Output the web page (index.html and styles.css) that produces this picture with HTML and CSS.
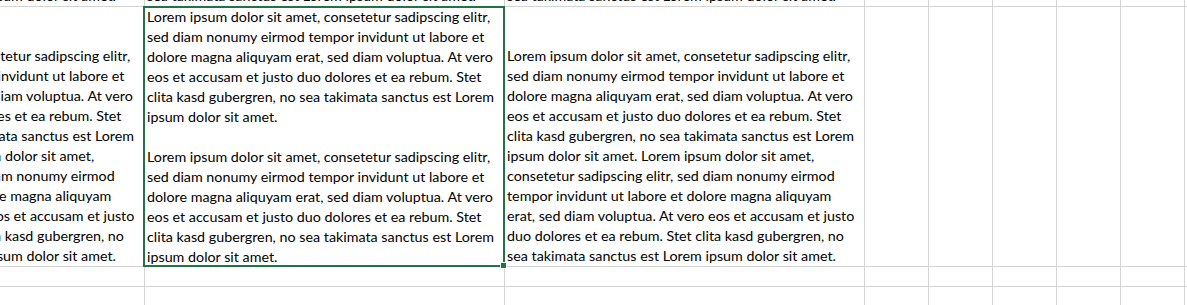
FILE: index.html
```html
<!DOCTYPE html>
<html lang="la">
<head>
<meta charset="utf-8">
<title>Sheet</title>
<link rel="stylesheet" href="styles.css">
</head>
<body>
<div class="sheet">
  <!-- row 1 (scrolled, only bottom visible) -->
  <div class="cell bottom"><div class="ln">sea takimata sanctus est Lorem ipsum dolor sit amet.</div></div>
  <div class="cell bottom"><div class="ln">sea takimata sanctus est Lorem ipsum dolor sit amet.</div></div>
  <div class="cell bottom"><div class="ln">sea takimata sanctus est Lorem ipsum dolor sit amet.</div></div>
  <div class="cell"></div><div class="cell"></div><div class="cell"></div><div class="cell"></div><div class="cell"></div><div class="cell"></div>

  <!-- row 2 -->
  <div class="cell bottom">
    <div class="ln">Lorem ipsum dolor sit amet, consetetur sadipscing elitr,</div>
    <div class="ln">sed diam nonumy eirmod tempor invidunt ut labore et</div>
    <div class="ln">dolore magna aliquyam erat, sed diam voluptua. At vero</div>
    <div class="ln">eos et accusam et justo duo dolores et ea rebum. Stet</div>
    <div class="ln">clita kasd gubergren, no sea takimata sanctus est Lorem</div>
    <div class="ln">ipsum dolor sit amet. Lorem ipsum dolor sit amet,</div>
    <div class="ln">consetetur sadipscing elitr, sed diam nonumy eirmod</div>
    <div class="ln">tempor invidunt ut labore et dolore magna aliquyam</div>
    <div class="ln">erat, sed diam voluptua. At vero eos et accusam et justo</div>
    <div class="ln">duo dolores et ea rebum. Stet clita kasd gubergren, no</div>
    <div class="ln">sea takimata sanctus est Lorem ipsum dolor sit amet.</div>
  </div>
  <div class="cell top selected">
    <div class="ln">Lorem ipsum dolor sit amet, consetetur sadipscing elitr,</div>
    <div class="ln">sed diam nonumy eirmod tempor invidunt ut labore et</div>
    <div class="ln">dolore magna aliquyam erat, sed diam voluptua. At vero</div>
    <div class="ln">eos et accusam et justo duo dolores et ea rebum. Stet</div>
    <div class="ln">clita kasd gubergren, no sea takimata sanctus est Lorem</div>
    <div class="ln">ipsum dolor sit amet.</div>
    <div class="ln">&nbsp;</div>
    <div class="ln">Lorem ipsum dolor sit amet, consetetur sadipscing elitr,</div>
    <div class="ln">sed diam nonumy eirmod tempor invidunt ut labore et</div>
    <div class="ln">dolore magna aliquyam erat, sed diam voluptua. At vero</div>
    <div class="ln">eos et accusam et justo duo dolores et ea rebum. Stet</div>
    <div class="ln">clita kasd gubergren, no sea takimata sanctus est Lorem</div>
    <div class="ln">ipsum dolor sit amet.</div>
    <div class="sel-box"></div>
    <div class="fill-handle"></div>
  </div>
  <div class="cell bottom">
    <div class="ln">Lorem ipsum dolor sit amet, consetetur sadipscing elitr,</div>
    <div class="ln">sed diam nonumy eirmod tempor invidunt ut labore et</div>
    <div class="ln">dolore magna aliquyam erat, sed diam voluptua. At vero</div>
    <div class="ln">eos et accusam et justo duo dolores et ea rebum. Stet</div>
    <div class="ln">clita kasd gubergren, no sea takimata sanctus est Lorem</div>
    <div class="ln">ipsum dolor sit amet. Lorem ipsum dolor sit amet,</div>
    <div class="ln">consetetur sadipscing elitr, sed diam nonumy eirmod</div>
    <div class="ln">tempor invidunt ut labore et dolore magna aliquyam</div>
    <div class="ln">erat, sed diam voluptua. At vero eos et accusam et justo</div>
    <div class="ln">duo dolores et ea rebum. Stet clita kasd gubergren, no</div>
    <div class="ln">sea takimata sanctus est Lorem ipsum dolor sit amet.</div>
  </div>
  <div class="cell"></div><div class="cell"></div><div class="cell"></div><div class="cell"></div><div class="cell"></div><div class="cell"></div>

  <!-- row 3 -->
  <div class="cell"></div><div class="cell"></div><div class="cell"></div>
  <div class="cell"></div><div class="cell"></div><div class="cell"></div><div class="cell"></div><div class="cell"></div><div class="cell"></div>

  <!-- row 4 -->
  <div class="cell"></div><div class="cell"></div><div class="cell"></div>
  <div class="cell"></div><div class="cell"></div><div class="cell"></div><div class="cell"></div><div class="cell"></div><div class="cell"></div>
</div>
</body>
</html>
```
FILE: styles.css
```css
html, body {
  margin: 0;
  padding: 0;
  background: #ffffff;
  overflow: hidden;
}

body {
  width: 1187px;
  height: 305px;
}

.sheet {
  display: grid;
  grid-template-columns: 360px 360px 360px repeat(6, 64px);
  grid-template-rows: 7px 260px 20px 20px;
  margin-left: -215px;
  width: max-content;
  font-family: "Lato", "Open Sans", sans-serif;
  font-size: 14.3px;
  line-height: 20px;
  color: #000000;
}

.cell {
  box-sizing: border-box;
  border-right: 1px solid #d4d4d4;
  border-bottom: 1px solid #d4d4d4;
  padding: 0 2px;
  display: flex;
  flex-direction: column;
  min-width: 0;
  min-height: 0;
}

.cell.bottom {
  justify-content: flex-end;
}

.cell.top {
  justify-content: flex-start;
}

.ln {
  white-space: nowrap;
  height: 20px;
  flex: none;
}

.selected {
  position: relative;
}

.sel-box {
  position: absolute;
  top: -1px;
  left: -2px;
  right: -1px;
  bottom: -1px;
  border: 2px solid #217346;
  pointer-events: none;
}

.fill-handle {
  position: absolute;
  right: -2px;
  bottom: -2px;
  width: 5px;
  height: 5px;
  background: #217346;
  box-shadow: 0 0 0 1px #ffffff;
}
```
